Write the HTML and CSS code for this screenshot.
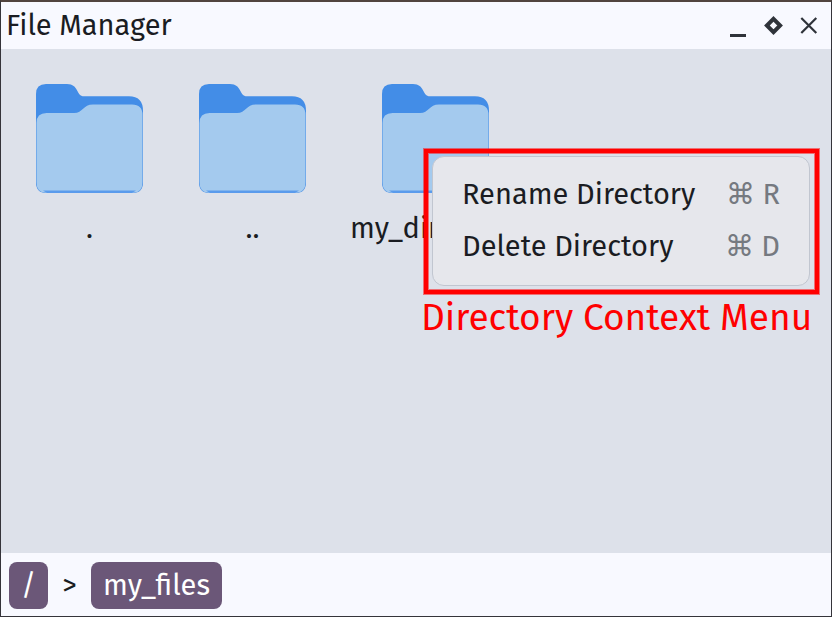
FILE: index.html
```html
<!DOCTYPE html>
<html lang="en">
<head>
<meta charset="utf-8">
<title>File Manager</title>
<link rel="stylesheet" href="styles.css">
</head>
<body>
<svg class="defs" width="0" height="0" aria-hidden="true">
  <symbol id="folder" viewBox="0 0 107 109">
    <path fill="#438de7" d="M0 10Q0 0 10 0H31C43 0 40 12.300 48 12.300H93Q107 12.300 107 27V98Q107 109 97 109H10Q0 109 0 98Z"/>
    <path fill="#a4caee" d="M.5 39Q.5 29 10.500 29H38C47 29 47 20.500 57 20.500H96Q106.500 20.500 106.500 31V98Q106.500 108.800 97 108.800H10Q.5 108.800 .5 98Z"/>
    <path fill="#5a9bec" d="M7 106.500H100L96 109H11Z"/>
  </symbol>
</svg>
<main class="window">
  <header class="titlebar">
    <h1 class="title">File Manager</h1>
    <div class="controls">
      <svg width="16" height="22" viewBox="0 0 16 22"><path d="M0 19.500H16" stroke="#2f333a" stroke-width="3"/></svg>
      <svg width="20" height="20" viewBox="0 0 20 20"><path d="M10.500 2.900L17.100 9.500L10.500 16.100L3.900 9.500Z" fill="none" stroke="#2f333a" stroke-width="4"/></svg>
      <svg width="18" height="20" viewBox="0 0 18 20"><path d="M1.300 2L16.300 17M16.300 2L1.300 17" stroke="#2f333a" stroke-width="2.200"/></svg>
    </div>
  </header>
  <section class="files">
    <div class="item"><svg class="folder"><use href="#folder"/></svg><span class="label">.</span></div>
    <div class="item"><svg class="folder"><use href="#folder"/></svg><span class="label">..</span></div>
    <div class="item"><svg class="folder"><use href="#folder"/></svg><span class="label">my_directory</span></div>
  </section>
  <footer class="path">
    <span class="crumb root">/</span><span class="separator">&gt;</span><span class="crumb">my_files</span>
  </footer>
  <div class="callout">
    <div class="menu">
      <div class="entry"><span class="name">Rename Directory</span><span class="keys">⌘ R</span></div>
      <div class="entry"><span class="name">Delete Directory</span><span class="keys">⌘ D</span></div>
    </div>
  </div>
  <div class="caption">Directory Context Menu</div>
</main>
</body>
</html>
```
FILE: styles.css
```css
* { box-sizing: border-box; }
body {
  margin: 0;
  font-family: "Fira Sans", "Noto Sans", sans-serif;
  font-size: 29px;
  color: #1a1c22;
}
.defs { position: absolute; }
.window {
  position: relative;
  display: flex;
  flex-direction: column;
  width: 832px;
  height: 617px;
  overflow: hidden;
  border: 1px solid #35343a;
  border-top: 2px solid #51443f;
  background: #f8f9ff;
}
.titlebar {
  display: flex;
  justify-content: space-between;
  height: 47px;
  padding: 0 13px 0 5px;
}
.title { margin: 0; font-size: 29px; font-weight: 400; line-height: 48px; }
.controls { display: flex; padding-top: 14px; gap: 17px; }
.files {
  flex: 1;
  display: flex;
  align-items: flex-start;
  padding: 35px 7px;
  background: #dde1ea;
}
.item {
  display: flex;
  flex-direction: column;
  align-items: center;
  min-width: 163px;
  padding: 0 16px;
}
.folder { width: 107px; height: 109px; }
.label { margin-top: 17px; line-height: 38px; }
.path {
  display: flex;
  align-items: flex-start;
  height: 63px;
  padding: 9px 8px;
}
.crumb {
  height: 47px;
  width: 131px;
  border-radius: 8px;
  background: #6b5778;
  color: #fff;
  line-height: 48px;
  text-align: center;
}
.crumb.root { width: 39px; }
.separator { width: 43px; text-align: center; line-height: 48px; }
.callout {
  position: absolute;
  left: 423px;
  top: 147px;
  width: 395px;
  height: 145px;
  padding: 3px 4px;
  border: 4px solid #f00;
  box-shadow: 0 0 0 1px rgba(255, 0, 0, .5), inset 0 0 0 1px rgba(255, 0, 0, .5);
}
.menu {
  width: 378px;
  height: 130px;
  padding: 12px 29px;
  border: 1px solid #c1c6d0;
  border-radius: 12px;
  background: #e6e7ec;
}
.entry { display: flex; justify-content: space-between; height: 52px; line-height: 52px; white-space: nowrap; }
.keys { color: #757980; }
.caption {
  position: absolute;
  left: 420px;
  top: 291px;
  color: #f00;
  font-size: 37px;
  line-height: 50px;
  white-space: nowrap;
}
```
